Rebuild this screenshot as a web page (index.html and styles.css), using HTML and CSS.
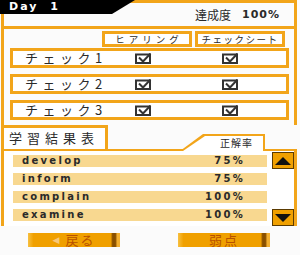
FILE: index.html
```html
<!DOCTYPE html>
<html lang="ja">
<head>
<meta charset="utf-8">
<link rel="stylesheet" href="styles.css">
</head>
<body>
<div class="screen">
  <div class="day-tab">Day 1</div>
  <section class="top-frame">
    <div class="summary"><span class="summary-label">達成度</span><span class="summary-value">100%</span></div>
    <div class="checks">
      <div class="check-head">
        <div class="head-box head-hearing">ヒアリング</div>
        <div class="head-box head-sheet">チェックシート</div>
      </div>
      <div class="check-row">
        <span class="check-name">チェック1</span>
        <svg class="cb cb1" width="17" height="11" viewBox="0 0 17 11"><rect x="1" y="1.5" width="14" height="8.5" fill="none" stroke="#333" stroke-width="2"/><path d="M4 4.5 L8 8.5 L15.5 0.5" fill="none" stroke="#333" stroke-width="2"/></svg>
        <svg class="cb cb2" width="17" height="11" viewBox="0 0 17 11"><rect x="1" y="1.5" width="14" height="8.5" fill="none" stroke="#333" stroke-width="2"/><path d="M4 4.5 L8 8.5 L15.5 0.5" fill="none" stroke="#333" stroke-width="2"/></svg>
      </div>
      <div class="check-row">
        <span class="check-name">チェック2</span>
        <svg class="cb cb1" width="17" height="11" viewBox="0 0 17 11"><rect x="1" y="1.5" width="14" height="8.5" fill="none" stroke="#333" stroke-width="2"/><path d="M4 4.5 L8 8.5 L15.5 0.5" fill="none" stroke="#333" stroke-width="2"/></svg>
        <svg class="cb cb2" width="17" height="11" viewBox="0 0 17 11"><rect x="1" y="1.5" width="14" height="8.5" fill="none" stroke="#333" stroke-width="2"/><path d="M4 4.5 L8 8.5 L15.5 0.5" fill="none" stroke="#333" stroke-width="2"/></svg>
      </div>
      <div class="check-row">
        <span class="check-name">チェック3</span>
        <svg class="cb cb1" width="17" height="11" viewBox="0 0 17 11"><rect x="1" y="1.5" width="14" height="8.5" fill="none" stroke="#333" stroke-width="2"/><path d="M4 4.5 L8 8.5 L15.5 0.5" fill="none" stroke="#333" stroke-width="2"/></svg>
        <svg class="cb cb2" width="17" height="11" viewBox="0 0 17 11"><rect x="1" y="1.5" width="14" height="8.5" fill="none" stroke="#333" stroke-width="2"/><path d="M4 4.5 L8 8.5 L15.5 0.5" fill="none" stroke="#333" stroke-width="2"/></svg>
      </div>
    </div>
  </section>
  <section class="results">
    <div class="tab-row">
      <div class="title-tab">学習結果表</div>
      <div class="rate-tab"><div class="rate-inner">正解率</div></div>
    </div>
    <div class="panel">
      <div class="list">
        <div class="word-row"><span>develop</span><span>75%</span></div>
        <div class="word-row"><span>inform</span><span>75%</span></div>
        <div class="word-row"><span>complain</span><span>100%</span></div>
        <div class="word-row"><span>examine</span><span>100%</span></div>
      </div>
      <div class="scroll">
        <div class="scroll-btn"><svg width="16" height="8" viewBox="0 0 16 8"><path d="M0 8 L8 0 L16 8 Z" fill="#111"/></svg></div>
        <div class="scroll-btn"><svg width="16" height="8" viewBox="0 0 16 8"><path d="M0 0 L16 0 L8 8 Z" fill="#111"/></svg></div>
      </div>
    </div>
  </section>
  <div class="buttons">
    <div class="btn"><span class="btn-arrow">◀</span><span class="btn-text">戻る</span></div>
    <div class="btn"><span class="btn-text">弱点</span></div>
  </div>
</div>
</body>
</html>
```
FILE: styles.css
```css
* { box-sizing: border-box; }
html, body { margin: 0; padding: 0; }
body {
  width: 300px;
  height: 255px;
  background: #fbfbfb;
  font-family: "Noto Sans CJK JP", "DejaVu Sans", sans-serif;
  color: #2a2a2a;
  overflow: hidden;
}
.screen {
  position: relative;
  width: 300px;
  height: 255px;
}
.day-tab {
  position: absolute;
  left: 0;
  top: 0;
  width: 135px;
  height: 14px;
  background: #000;
  clip-path: polygon(0 0, 135px 0, 112px 100%, 0 100%);
  color: #fff;
  font-family: "DejaVu Sans", sans-serif;
  font-weight: bold;
  font-size: 11px;
  line-height: 14px;
  letter-spacing: 2px;
  word-spacing: 6px;
  padding-left: 9px;
  z-index: 2;
}
.top-frame {
  margin-left: 1px;
  width: 296px;
  border: 3px solid #f2a51a;
  border-bottom: 0;
}
.summary {
  height: 26px;
  border-bottom: 3px solid #f2a51a;
  display: flex;
  justify-content: flex-end;
  align-items: center;
  padding-right: 14px;
  gap: 11px;
  background: #fbfbfb;
}
.summary-label {
  font-size: 12px;
  letter-spacing: 0;
}
.summary-value {
  font-family: "DejaVu Sans", sans-serif;
  font-weight: bold;
  font-size: 11px;
  letter-spacing: 1px;
}
.checks {
  height: 96px;
  padding-top: 2px;
  display: flex;
  flex-direction: column;
  gap: 6px;
}
.check-head {
  display: flex;
  gap: 3px;
  margin-left: 98px;
  height: 16px;
  margin-bottom: -5px;
}
.head-box {
  width: 90px;
  height: 16px;
  border: 3px solid #f2a51a;
  background: #fff;
  font-size: 9.5px;
  line-height: 10px;
  text-align: center;
}
.head-hearing { letter-spacing: 4px; padding-left: 4px; }
.head-sheet { letter-spacing: 1.5px; }
.check-row {
  margin-left: 6px;
  width: 279px;
  height: 20px;
  border: 3px solid #f2a51a;
  background: #fff;
  display: grid;
  grid-template-columns: 122px 17px 70px 17px;
  align-items: center;
}
.check-name {
  padding-left: 12px;
  font-size: 13px;
  letter-spacing: 4.5px;
  line-height: 14px;
}
.cb { display: block; }
.cb2 { grid-column: 4; }
.results {
  margin-left: 1px;
  width: 296px;
}
.tab-row {
  display: flex;
  align-items: flex-end;
  height: 24px;
}
.title-tab {
  width: 107px;
  height: 24px;
  border: 3px solid #f2a51a;
  border-bottom: 0;
  background: #fff;
  font-size: 13px;
  line-height: 20px;
  letter-spacing: 5px;
  padding-left: 5px;
}
.rate-tab {
  margin-left: 72px;
  width: 85px;
  height: 17px;
  margin-bottom: -2px;
  background: #f2a51a;
  clip-path: polygon(0 100%, 23px 0, 100% 0, 100% 100%);
  padding: 2px 2px 0 3px;
  position: relative;
  z-index: 1;
}
.rate-inner {
  height: 15px;
  background: #fff;
  clip-path: polygon(0 100%, 22px 0, 100% 0, 100% 100%);
  font-size: 10px;
  line-height: 13px;
  letter-spacing: 1px;
  text-align: right;
  padding-right: 10px;
}
.panel {
  height: 77px;
  border-top: 2px solid #f2a51a;
  border-left: 3px solid #f2a51a;
  border-right: 3px solid #f2a51a;
  background: #fff;
  display: flex;
}
.list {
  margin-left: 9px;
  width: 254px;
  padding-top: 4px;
  display: flex;
  flex-direction: column;
  gap: 6px;
}
.word-row {
  height: 12px;
  background: #f8d890;
  display: flex;
  justify-content: space-between;
  padding: 0 22px 0 9px;
  font-family: "DejaVu Sans", sans-serif;
  font-weight: bold;
  font-size: 10px;
  line-height: 12px;
  letter-spacing: 2.3px;
}
.scroll {
  margin-left: 5px;
  flex: 1;
  display: flex;
  flex-direction: column;
  justify-content: space-between;
  padding: 1px 0 0;
}
.scroll-btn {
  height: 17px;
  background: #f0a000;
  border: 1px solid #5a3a00;
  display: flex;
  align-items: center;
  justify-content: center;
}
.buttons {
  display: flex;
  gap: 58px;
  margin-top: 7px;
  padding-left: 28px;
}
.btn {
  width: 92px;
  height: 14px;
  background: linear-gradient(to right, #f8c040 0, #f0a000 6%, #f0a000 90%, #8a5000 92%, #8a5000 95%, #f4b030 97%);
  display: flex;
  align-items: center;
  justify-content: center;
  gap: 6px;
}
.btn-arrow {
  color: #f8c878;
  font-size: 9px;
  line-height: 14px;
  font-family: "DejaVu Sans", sans-serif;
}
.btn-text {
  color: #b85000;
  font-size: 13px;
  line-height: 14px;
  letter-spacing: 2px;
}
```
